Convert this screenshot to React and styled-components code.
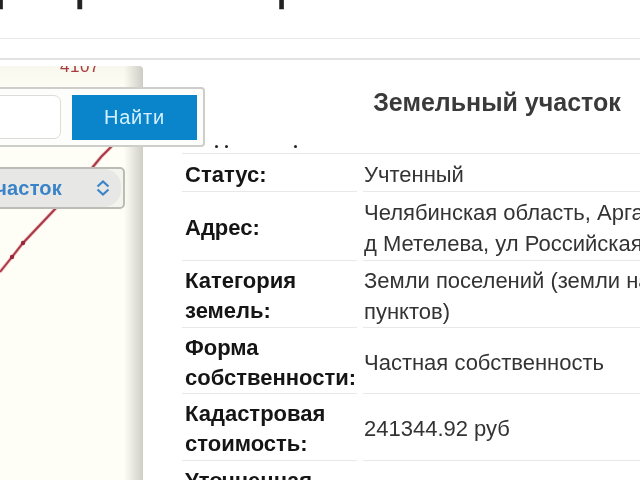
import React from 'react'
import styled, { createGlobalStyle } from 'styled-components'

const rows = [
  { label: ['Статус:'], value: ['Учтенный'], height: 38 },
  { label: ['Адрес:'], value: ['Челябинская область, Аргаяшский район,', 'д Метелева, ул Российская, дом 12'], height: 69 },
  { label: ['Категория', 'земель:'], value: ['Земли поселений (земли населенных', 'пунктов)'], height: 67 },
  { label: ['Форма', 'собственности:'], value: ['Частная собственность'], height: 66 },
  { label: ['Кадастровая', 'стоимость:'], value: ['241344.92 руб'], height: 67 },
  { label: ['Уточненная', 'площадь:'], value: ['600 кв. м'], height: 67 },
]

const trackPoints = '113,79 101,91 92,102 57,141 23,177 12,191 0,206'

function App() {
  return (
    <Page>
      <GlobalStyle />
      <Header>
        <Title>Перепрос из карты на сайте объекта</Title>
      </Header>
      <SubBar />
      <Main>
        <MapColumn>
          <MapLabel>4107</MapLabel>
          <Track viewBox="0 0 143 414">
            <polyline points={trackPoints} fill="none" stroke="#f0c4c4" strokeWidth="3.6" />
            <polyline points={trackPoints} fill="none" stroke="#a83a46" strokeWidth="2" />
            <circle cx="23" cy="177" r="2.2" fill="#98263a" />
            <circle cx="12" cy="191" r="2.2" fill="#98263a" />
          </Track>
        </MapColumn>
        <SearchBox>
          <SearchInput />
          <SearchButton>Найти</SearchButton>
        </SearchBox>
        <SelectBox>
          <SelectInner>
            <SelectText>Земельный участок</SelectText>
            <svg width="14" height="16" viewBox="0 0 14 16" fill="none" stroke="#3d86c6" strokeWidth="2.2">
              <path d="M1.5 6.5 L7 1.5 L12.5 6.5" />
              <path d="M1.5 9.5 L7 14.5 L12.5 9.5" />
            </svg>
          </SelectInner>
        </SelectBox>
        <Panel>
          <Heading>Земельный участок</Heading>
          <Specks>
            <Speck />
            <Speck />
            <Speck $wide />
          </Specks>
          <Table>
            {rows.map((row) => (
              <Row key={row.label[0]} $height={row.height}>
                <Label>
                  {row.label.map((line) => (
                    <Line key={line}>{line}</Line>
                  ))}
                </Label>
                <Value>
                  {row.value.map((line) => (
                    <Line key={line}>{line}</Line>
                  ))}
                </Value>
              </Row>
            ))}
          </Table>
        </Panel>
      </Main>
    </Page>
  )
}

export default App

const GlobalStyle = createGlobalStyle`
  html, body {
    margin: 0;
    height: 100%;
    overflow: hidden;
    background: #fff;
  }
`

const Page = styled.div`
  width: 640px;
  height: 480px;
  overflow: hidden;
  display: flex;
  flex-direction: column;
  background: #fff;
  font-family: "Liberation Sans", Arial, sans-serif;
  filter: blur(0.55px);
`

const Header = styled.div`
  height: 38px;
  flex: none;
  overflow: hidden;
  border-bottom: 1px solid #e9e9e9;
`

const Title = styled.div`
  margin: -44px 0 0 -66px;
  font-size: 48px;
  line-height: 54px;
  color: #222;
  white-space: nowrap;
  -webkit-text-stroke: 0.5px #222;
`

const SubBar = styled.div`
  height: 19px;
  flex: none;
  border-bottom: 2px solid #e2e2e2;
`

const Main = styled.div`
  position: relative;
  flex: 1;
  display: flex;
  min-height: 0;
`

const MapColumn = styled.div`
  position: relative;
  width: 143px;
  flex: none;
  margin-top: 6px;
  overflow: hidden;
  border-radius: 0 4px 0 0;
  background:
    linear-gradient(90deg, rgba(190, 190, 182, 0) 124px, rgba(190, 190, 182, 0.75) 143px),
    linear-gradient(180deg, #f8f8ee 0, #fefef6 30px);
`

const MapLabel = styled.div`
  position: absolute;
  top: -8px;
  left: 60px;
  font-size: 17px;
  line-height: 17px;
  letter-spacing: 0.5px;
  color: #a83a40;
`

const Track = styled.svg`
  position: absolute;
  top: 0;
  left: 0;
  width: 143px;
  height: 414px;
`

const SearchBox = styled.div`
  position: absolute;
  top: 27px;
  left: -20px;
  width: 225px;
  height: 60px;
  box-sizing: border-box;
  display: flex;
  align-items: center;
  gap: 11px;
  padding: 0 6px 0 0;
  background: #fdfdfb;
  border: 2px solid #cdcdca;
  border-radius: 4px;
`

const SearchInput = styled.div`
  width: 80px;
  height: 44px;
  box-sizing: border-box;
  background: #fff;
  border: 1px solid #dcdcd8;
  border-radius: 7px;
`

const SearchButton = styled.div`
  width: 127px;
  height: 45px;
  display: flex;
  align-items: center;
  justify-content: center;
  background: #0a84cb;
  color: #d4f0ff;
  font-size: 20px;
  letter-spacing: 0.8px;
`

const SelectBox = styled.div`
  position: absolute;
  top: 107px;
  left: -90px;
  width: 215px;
  height: 42px;
  box-sizing: border-box;
  background: #f4f4ee;
  border: 2px solid #bcbcb6;
  border-radius: 5px;
`

const SelectInner = styled.div`
  height: 100%;
  display: flex;
  align-items: center;
  justify-content: space-between;
  padding-right: 11px;
  background: #e7e7e5;
  border-radius: 0 17px 17px 0;
  margin-right: 2px;
`

const SelectText = styled.span`
  font-size: 20px;
  font-weight: 700;
  color: #3a83c8;
  white-space: nowrap;
  direction: rtl;
  width: 150px;
  letter-spacing: 0.2px;
`

const Panel = styled.div`
  flex: 1;
  min-width: 0;
  overflow: hidden;
  padding-left: 39px;
`

const Heading = styled.h2`
  width: 630px;
  margin: 0;
  padding-top: 27px;
  height: 49px;
  font-size: 25px;
  line-height: 30px;
  font-weight: 700;
  text-align: center;
  color: #3a3a3a;
`

const Specks = styled.div`
  height: 17px;
  display: flex;
  align-items: flex-start;
  padding: 9px 0 0 33px;
  box-sizing: border-box;
  gap: 7px;
`

const Speck = styled.i`
  width: 3px;
  height: 3px;
  background: #222;
  border-radius: 50%;
  margin-left: ${(p) => (p.$wide ? '59px' : '0')};
`

const Table = styled.div`
  width: 630px;
  border-top: 1px solid #e8e8e8;
`

const Row = styled.div`
  display: grid;
  grid-template-columns: 175px 1fr;
  column-gap: 6px;
  height: ${(p) => p.$height}px;
`

const Label = styled.div`
  display: flex;
  flex-direction: column;
  justify-content: center;
  padding: 4px 0 0 3px;
  border-bottom: 1px solid #e8e8e8;
  font-size: 22px;
  line-height: 30px;
  font-weight: 700;
  color: #151515;
  white-space: nowrap;
`

const Value = styled.div`
  display: flex;
  flex-direction: column;
  justify-content: center;
  padding: 3px 0 0 1px;
  border-bottom: 1px solid #e8e8e8;
  font-size: 22px;
  line-height: 31px;
  color: #333;
  white-space: nowrap;
`

const Line = styled.span`
  display: block;
`
